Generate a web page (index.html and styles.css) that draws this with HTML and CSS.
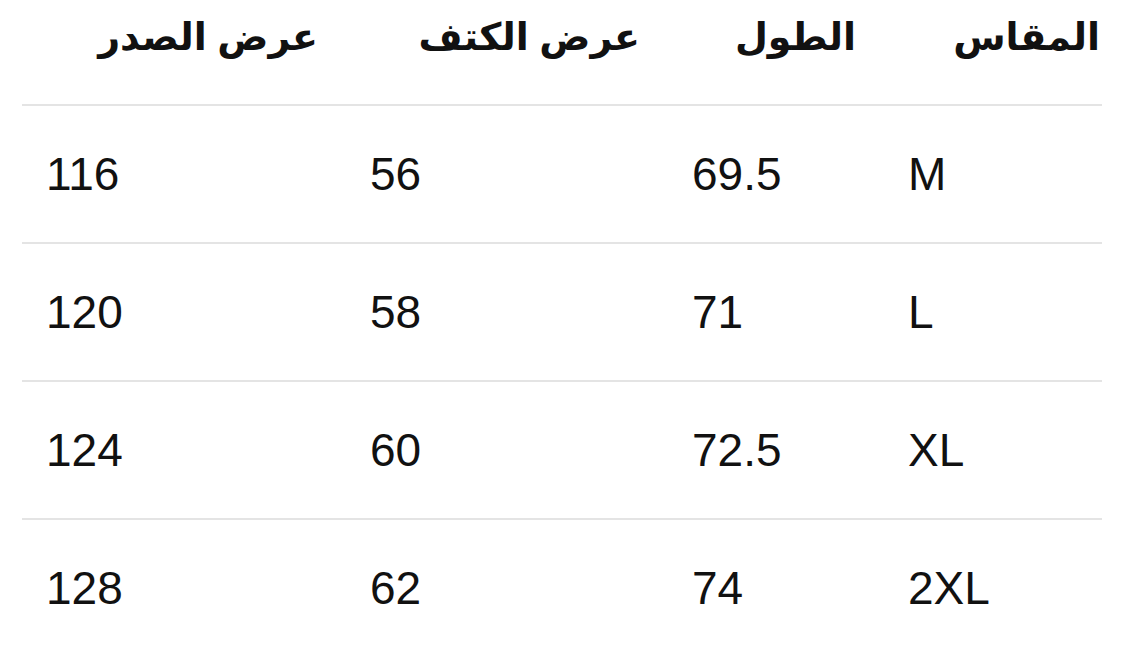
FILE: index.html
```html
<!DOCTYPE html>
<html lang="ar">
<head>
<meta charset="utf-8">
<title>جدول المقاسات</title>
<link rel="stylesheet" href="styles.css">
</head>
<body>
<div class="table">
  <div class="row head">
    <div class="cell h">عرض الصدر</div>
    <div class="cell h">عرض الكتف</div>
    <div class="cell h">الطول</div>
    <div class="cell h last">المقاس</div>
  </div>
  <div class="row">
    <div class="cell">116</div><div class="cell">56</div><div class="cell">69.5</div><div class="cell">M</div>
  </div>
  <div class="row">
    <div class="cell">120</div><div class="cell">58</div><div class="cell">71</div><div class="cell">L</div>
  </div>
  <div class="row">
    <div class="cell">124</div><div class="cell">60</div><div class="cell">72.5</div><div class="cell">XL</div>
  </div>
  <div class="row end">
    <div class="cell">128</div><div class="cell">62</div><div class="cell">74</div><div class="cell">2XL</div>
  </div>
</div>
</body>
</html>
```
FILE: styles.css
```css
html, body {
  margin: 0;
  padding: 0;
  background: #ffffff;
}
body {
  font-family: "Liberation Sans", "DejaVu Sans", sans-serif;
  color: #111111;
}
.table {
  margin-left: 22px;
  width: 1080px;
}
.row {
  display: grid;
  grid-template-columns: 324px 322px 216px 218px;
  height: 136px;
  align-items: center;
  border-bottom: 2px solid #e4e4e4;
}
.row.head {
  height: 74px;
  padding-bottom: 30px;
  align-items: center;
}
.row.end {
  border-bottom: none;
}
.cell {
  font-size: 46px;
  padding-left: 24px;
  line-height: 1;
}
.cell.h {
  direction: rtl;
  text-align: right;
  padding-left: 0;
  padding-right: 28px;
  font-weight: bold;
  font-size: 38px;
}
.cell.h.last {
  padding-right: 2px;
}
```
